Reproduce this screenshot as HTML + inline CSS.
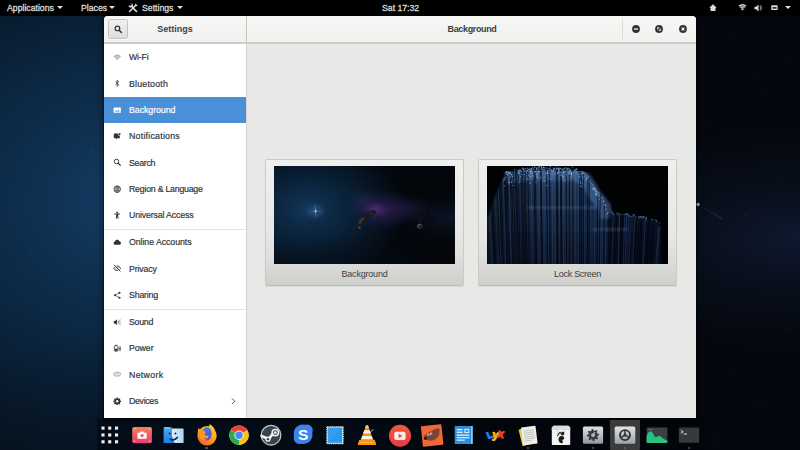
<!DOCTYPE html>
<html>
<head>
<meta charset="utf-8">
<title>Settings - Background</title>
<style>
html,body{margin:0;padding:0;}
body{width:800px;height:450px;overflow:hidden;position:relative;background:#050a12;font-family:"Liberation Sans",sans-serif;font-size:9px;color:#2e3436;}
.abs{position:absolute;}
#wall{left:0;top:0;width:800px;height:450px;overflow:hidden;}
.wp{position:absolute;left:0;top:0;width:800px;height:450px;transform-origin:0 0;background:
  radial-gradient(ellipse 8px 8px at 184px 207px, #fff 0%, rgba(200,225,255,0.85) 30%, rgba(120,170,230,0) 100%),
  radial-gradient(ellipse 42px 2.500px at 184px 207px, rgba(200,225,255,0.75) 0%, rgba(160,200,255,0) 100%),
  radial-gradient(ellipse 2.500px 36px at 184px 207px, rgba(200,225,255,0.6) 0%, rgba(160,200,255,0) 100%),
  radial-gradient(ellipse 46px 40px at 184px 207px, rgba(80,135,195,0.5) 0%, rgba(40,90,150,0) 100%),
  radial-gradient(ellipse 60px 42px at 446px 200px, rgba(125,55,160,0.7) 0%, rgba(90,45,130,0.3) 60%, rgba(50,30,90,0) 100%),
  radial-gradient(ellipse 150px 90px at 480px 200px, rgba(84,44,130,0.65) 0%, rgba(62,38,108,0.38) 50%, rgba(40,28,80,0) 100%),
  radial-gradient(ellipse 70px 55px at 395px 160px, rgba(50,55,120,0.4) 0%, rgba(30,30,80,0) 100%),
  radial-gradient(ellipse 100px 60px at 600px 195px, rgba(50,38,100,0.45) 0%, rgba(30,25,70,0) 100%),
  radial-gradient(ellipse 270px 110px at 800px 238px, rgba(15,26,50,0.9) 0%, rgba(11,20,38,0.55) 45%, rgba(6,11,22,0) 100%),
  radial-gradient(ellipse 420px 130px at 300px 450px, rgba(7,20,35,0.6) 0%, rgba(7,20,35,0) 100%),
  radial-gradient(ellipse 440px 330px at 150px 200px, #174370 0%, #12395e 12%, #0f3152 24%, #0c2945 40%, #091e33 60%, #061422 78%, #04070d 100%),
  #04070d;}
#topbar{left:0;top:0;width:800px;height:16px;background:#000;color:#dcdcdc;font-size:8.7px;-webkit-text-stroke:0.3px #dcdcdc;}
#topbar span{position:absolute;top:0;line-height:16px;white-space:nowrap;}
.tri{position:absolute;width:0;height:0;border-left:3px solid transparent;border-right:3px solid transparent;border-top:3px solid #e4e4e4;top:6px;}
#win{left:104px;top:16px;width:592px;height:402px;background:#e8e8e7;border-radius:4px 4px 0 0;overflow:hidden;box-shadow:0 2px 9px rgba(0,0,0,0.55),0 0 0 1px rgba(0,0,0,0.35);}
#hdrL{left:0;top:0;width:142px;height:26px;background:linear-gradient(#f6f6f5,#f1f1f0);border-bottom:2px solid #cbcbc8;}
#hdrR{left:142px;top:0;width:450px;height:26px;background:linear-gradient(#f6f6f5,#f1f1f0);border-bottom:2px solid #cbcbc8;border-left:1px solid #c6c6c3;}
.title{font-weight:bold;font-size:9px;color:#3a3f41;line-height:26px;text-align:center;}
#side{left:0;top:28px;width:142px;height:375px;background:#fff;border-right:1px solid #d4d4d1;}
.row{position:absolute;left:0;width:142px;height:26.35px;line-height:26.35px;}
.row span{position:absolute;left:25px;top:0;white-space:nowrap;font-size:8.8px;color:#2e3436;-webkit-text-stroke:0.18px #2e3436;}
.row svg{position:absolute;left:8.800px;top:8.700px;width:8.400px;height:8.400px;}
.row.sel{background:#4a90d9;}
.row.sel span{color:#fff;-webkit-text-stroke:0.18px #fff;}
.sep{position:absolute;left:0;width:142px;height:1px;background:#e4e4e2;}
.card{position:absolute;top:143px;width:197px;height:125px;border:1px solid #cacac6;border-bottom-color:#bcbcb8;border-radius:2px;background:linear-gradient(#efefee 0%,#e7e7e5 60%,#dcdcda 82%,#cececb 100%);box-shadow:0 1px 1px rgba(0,0,0,0.07);}
.card .lbl{position:absolute;left:0;width:197px;top:108px;text-align:center;font-size:9px;color:#3c4143;line-height:12px;}
.card .img{position:absolute;left:8px;top:6px;width:181px;height:98px;overflow:hidden;background:#000;}
#dock{left:97px;top:418px;width:608px;height:32px;background:rgba(1,3,6,0.45);}
</style>
</head>
<body>
<div id="wall" class="abs"><div class="wp"><svg class="abs" style="left:0;top:0" width="800" height="450" viewBox="0 0 800 450"><path d="M62 40h.01M18 120h.01M75 185h.01M30 255h.01M88 300h.01M50 345h.01M12 390h.01M70 410h.01M40 75h.01M92 150h.01M732 33h.01M758 78h.01M765 90h.01M720 150h.01M780 180h.01M745 215h.01M770 260h.01M715 300h.01M790 330h.01M735 370h.01M760 405h.01M705 120h.01M785 60h.01" stroke="#9fb6d4" stroke-width="1.100" stroke-linecap="round" opacity=".24" fill="none"/><path d="M362 272l4 -24 18 -20 22 -10 16 -10 20 -6 10 6 -4 12 -20 12 -12 8 -10 18 -8 10 -6 14 -12 12 -14 -2z" fill="#1b1f27"/><path d="M372 262l8 -16 14 -10 8 4 -12 12 -8 14z" fill="#3b4350"/><path d="M412 224l20 -10 10 2 -14 10z" fill="#2b303b"/><circle cx="378" cy="283" r="5" fill="#59606c"/><path d="M632 232l8 36 14 -2 6 -36z" fill="#3a4a6a" opacity=".12"/><circle cx="645" cy="277" r="11.500" fill="#6a7686"/><circle cx="649" cy="280" r="11.500" fill="#10151f" opacity=".8"/><path d="M697 204l26 14 -1 2z" fill="#4a6a92" opacity=".2"/><circle cx="698" cy="204.500" r="1.800" fill="#b8cde8" opacity=".8"/></svg></div></div>

<div id="topbar" class="abs">
 <span style="left:7px">Applications</span><i class="tri" style="left:57px"></i>
 <span style="left:81px">Places</span><i class="tri" style="left:109px"></i>
 <span style="left:142px">Settings</span><i class="tri" style="left:177px"></i>
 <span style="left:382px">Sat 17:32</span>
 <i class="tri" style="left:785px"></i>

 <svg class="abs" style="left:127.500px;top:2.800px;width:10px;height:10px" viewBox="0 0 16 16"><path d="M2.500 13.500L12.500 3.500" stroke="#e4e4e4" stroke-width="2.400" stroke-linecap="round"/><path d="M13.500 13.500L8 8" stroke="#e4e4e4" stroke-width="2.600" stroke-linecap="round"/><path d="M0.800 3.800a3.400 3.400 0 0 0 5 3l1.500 1.500 1.800 -1.800 -1.500 -1.500a3.400 3.400 0 0 0 -3 -4.800l1.500 1.800 -.9 1.900 -2 .6z" fill="#e4e4e4"/><path d="M11.800 0.800l3.400 3.400 -2.200 .8 -2 -2z" fill="#e4e4e4"/></svg>
 <svg class="abs" style="left:708.500px;top:3.900px;width:8px;height:7.300px" preserveAspectRatio="none" viewBox="0 0 16 16"><path d="M8 0.500L0.500 8h2.500v7.500h10v-7.500h2.500z" fill="#dcdcdc"/></svg>
 <svg class="abs" style="left:737.500px;top:2.900px;width:9px;height:8px" viewBox="0 0 18 16"><path d="M9 15.500L0.500 5A13.500 13.500 0 0 1 17.500 5z" fill="#6a6a6a"/><path d="M2.500 5.800A10.500 10.500 0 0 1 15.500 5.800M5 9A6.500 6.500 0 0 1 13 9" stroke="#e0e0e0" stroke-width="2" fill="none"/><path d="M9 15L6.800 12.200a3.500 3.500 0 0 1 4.400 0z" fill="#e0e0e0"/></svg>
 <svg class="abs" style="left:754px;top:3.500px;width:9px;height:8px" viewBox="0 0 18 16"><path d="M1 5.500h3.500l4.500 -4.500v14l-4.500 -4.500h-3.500z" fill="#dcdcdc"/><path d="M11.500 3.500a6.500 6.500 0 0 1 0 9" stroke="#8a8a8a" stroke-width="2.200" fill="none"/><path d="M14.200 1.800a9.500 9.500 0 0 1 0 12.400" stroke="#4a4a4a" stroke-width="1.800" fill="none"/></svg>
 <svg class="abs" style="left:770.500px;top:4.800px;width:7.500px;height:5.500px" preserveAspectRatio="none" viewBox="0 0 16 11"><rect x="0.500" y="0.500" width="13.500" height="10" rx="1.500" fill="#dcdcdc"/><rect x="14" y="3" width="2" height="5" fill="#dcdcdc"/><rect x="3" y="4" width="9" height="3.500" fill="#333"/></svg>
</div>

<div id="win" class="abs">
 <div id="hdrL" class="abs"><div class="abs" style="left:4px;top:3px;width:18px;height:18px;border:1px solid #c3c3bf;border-radius:2.500px;background:linear-gradient(#f0f0ef,#dededc);box-shadow:0 1px 0 rgba(255,255,255,.6)"><svg class="abs" style="left:5px;top:5px;width:8.500px;height:8.500px" viewBox="0 0 16 16"><circle cx="6.500" cy="6.500" r="4.300" stroke="#2e3436" stroke-width="2.300" fill="none"/><path d="M9.800 9.800L14 14" stroke="#2e3436" stroke-width="2.800" stroke-linecap="round"/></svg></div><div class="title abs" style="left:0;width:142px;top:0">Settings</div></div>
 <div id="hdrR" class="abs"><div class="abs" style="left:374.500px;top:3px;width:1px;height:20px;background:#dcdcd9"></div>
<svg class="abs" style="left:385px;top:9px;width:8px;height:8px" viewBox="0 0 8 8"><circle cx="4" cy="4" r="3.900" fill="#2e3436"/><rect x="2" y="3.400" width="4" height="1.300" fill="#f4f4f3"/></svg>
<svg class="abs" style="left:408px;top:9px;width:8px;height:8px" viewBox="0 0 8 8"><circle cx="4" cy="4" r="3.900" fill="#2e3436"/><path d="M2.200 2.200h2.600l-2.600 2.600zM5.800 5.800h-2.600l2.600 -2.600z" fill="#f4f4f3"/></svg>
<svg class="abs" style="left:431.500px;top:9px;width:8px;height:8px" viewBox="0 0 8 8"><circle cx="4" cy="4" r="3.900" fill="#2e3436"/><path d="M2.600 2.600l2.800 2.800M5.400 2.600l-2.800 2.800" stroke="#f4f4f3" stroke-width="1.150"/></svg><div class="title abs" style="left:0;width:450px;top:0;letter-spacing:-0.37px">Background</div></div>
 <div id="side" class="abs">
  <div class="row" style="top:0.3px"><svg viewBox="0 0 16 16"><path d="M8 13.800L0.600 6.200A11.500 11.500 0 0 1 15.400 6.200Z" fill="#b0b2b2"/><path d="M2.800 8.400A8.500 8.500 0 0 1 13.200 8.400M5 10.600A5 5 0 0 1 11 10.600" stroke="#fff" stroke-width="0.900" fill="none" opacity=".75"/></svg><span style="letter-spacing:-0.200px">Wi-Fi</span></div>
  <div class="row" style="top:26.65px"><svg viewBox="0 0 16 16"><path d="M4.800 5L11 10.800L8 13.800V2.200L11 5.200L4.800 11" stroke="#2e3436" stroke-width="1.500" fill="none" stroke-linejoin="round"/></svg><span style="letter-spacing:0.200px">Bluetooth</span></div>
  <div class="row sel" style="top:53px"><svg viewBox="0 0 16 16"><rect x="1" y="3" width="14" height="10" rx="1.2" fill="#fff"/><path d="M3 11 L6 7.5 L8 9.5 L10.5 6.5 L13 11 Z" fill="#4a90d9" opacity=".75"/></svg><span style="letter-spacing:-0.060px">Background</span></div>
  <div class="row" style="top:79.35px"><svg viewBox="0 0 16 16"><path d="M2.5 3h7.5v3.5h3v5.5h-5l-2 2.2v-2.2h-3.500a1 1 0 0 1 -1 -1v-7a1 1 0 0 1 1 -1z" fill="#2e3436"/><circle cx="12.6" cy="3.6" r="1.9" fill="#2e3436"/></svg><span style="letter-spacing:0.238px">Notifications</span></div>
  <div class="row" style="top:105.7px"><svg viewBox="0 0 16 16"><circle cx="6.700" cy="6.700" r="4.300" stroke="#2e3436" stroke-width="1.800" fill="none"/><path d="M10 10L14 14" stroke="#2e3436" stroke-width="2.100" stroke-linecap="round"/></svg><span style="letter-spacing:-0.283px">Search</span></div>
  <div class="row" style="top:132.05px"><svg viewBox="0 0 16 16"><circle cx="8" cy="8" r="6.3" stroke="#2e3436" stroke-width="1.5" fill="none"/><ellipse cx="8" cy="8" rx="2.8" ry="6.3" stroke="#2e3436" stroke-width="1.2" fill="none"/><path d="M2 5.8h12M2 10.2h12M8 1.7v12.600" stroke="#2e3436" stroke-width="1.2"/></svg><span style="letter-spacing:-0.241px">Region &amp; Language</span></div>
  <div class="row" style="top:158.4px"><svg viewBox="0 0 16 16"><circle cx="8" cy="2.600" r="1.8" fill="#2e3436"/><path d="M2.500 5h11v1.800h-3.700l0.800 8h-1.700l-0.600 -4.500h-0.600l-0.600 4.500h-1.700l0.800 -8h-3.700z" fill="#2e3436"/></svg><span style="letter-spacing:-0.150px">Universal Access</span></div>
  <div class="sep" style="top:184.5px"></div>
  <div class="row" style="top:185.35px"><svg viewBox="0 0 16 16"><path d="M4.200 13a3.200 3.200 0 0 1 -0.400 -6.350a4.300 4.300 0 0 1 8.300 -0.650a3.550 3.550 0 0 1 0.300 7z" fill="#2e3436"/></svg><span style="letter-spacing:-0.073px">Online Accounts</span></div>
  <div class="row" style="top:211.7px"><svg viewBox="0 0 16 16"><path d="M1.200 8.300c2 -3.200 4.300 -4.400 6.800 -4.400s4.800 1.200 6.800 4.400c-2 3 -4.300 4.100 -6.800 4.100s-4.800 -1.100 -6.800 -4.100z" stroke="#2e3436" stroke-width="1.900" fill="none"/><circle cx="8" cy="8.200" r="2.500" fill="#2e3436"/><path d="M2.500 2.500l11 11" stroke="#fff" stroke-width="3.400"/><path d="M2.200 2.200l11.600 11.600" stroke="#2e3436" stroke-width="1.800" stroke-linecap="round"/></svg><span style="letter-spacing:-0.143px">Privacy</span></div>
  <div class="row" style="top:238.05px"><svg viewBox="0 0 16 16"><path d="M12.300 3.200L4 8l8.300 4.800" stroke="#2e3436" stroke-width="1.300" fill="none"/><circle cx="12.400" cy="3.200" r="2" fill="#2e3436"/><circle cx="3.800" cy="8" r="2" fill="#2e3436"/><circle cx="12.400" cy="12.800" r="2" fill="#2e3436"/></svg><span style="letter-spacing:-0.186px">Sharing</span></div>
  <div class="sep" style="top:264.5px"></div>
  <div class="row" style="top:265px"><svg viewBox="0 0 16 16"><path d="M1.500 5.700h2.500l3.500 -3.200v11l-3.500 -3.200h-2.500z" fill="#2e3436"/><path d="M9.300 5.300a3.800 3.800 0 0 1 0 5.400" stroke="#2e3436" stroke-width="1.300" fill="none"/><path d="M11.200 3.300a6.600 6.600 0 0 1 0 9.400" stroke="#8a8e8f" stroke-width="1.300" fill="none"/><path d="M13.100 1.600a9 9 0 0 1 0 12.800" stroke="#b5b8b8" stroke-width="1.200" fill="none"/></svg><span style="letter-spacing:-0.260px">Sound</span></div>
  <div class="row" style="top:291.35px"><svg viewBox="0 0 16 16"><rect x="2.700" y="3.200" width="6.600" height="10.600" rx="1.200" stroke="#2e3436" stroke-width="1.500" fill="none"/><rect x="4.500" y="1.500" width="3" height="1.500" fill="#2e3436"/><rect x="3.600" y="9" width="4.800" height="4" fill="#2e3436"/><path d="M12 5v3M14.500 5v3M11.200 8h4.100v1.500a2 2 0 0 1 -4.100 0zM13.250 11v3" stroke="#2e3436" stroke-width="1.200" fill="none"/></svg><span style="letter-spacing:-0.080px">Power</span></div>
  <div class="row" style="top:317.7px"><svg viewBox="0 0 16 16"><ellipse cx="8" cy="8" rx="7" ry="3.800" stroke="#8e9191" stroke-width="1.400" fill="none"/><ellipse cx="8" cy="8.300" rx="3.800" ry="1.700" stroke="#a4a7a7" stroke-width="1.100" fill="none"/></svg><span style="letter-spacing:0.300px">Network</span></div>
  <div class="row" style="top:344.05px"><svg viewBox="0 0 16 16"><path d="M8 1.300l1.100 0 .5 1.900 1.300 .55 1.700 -1 1.500 1.500 -1 1.700 .55 1.300 1.900 .5v2.100l-1.900 .5 -.55 1.300 1 1.700 -1.500 1.500 -1.700 -1 -1.300 .55 -.5 1.900h-2.100l-.5 -1.900 -1.300 -.55 -1.700 1 -1.500 -1.500 1 -1.700 -.55 -1.300 -1.900 -.5v-2.100l1.900 -.5 .55 -1.300 -1 -1.700 1.500 -1.500 1.700 1 1.300 -.55 .5 -1.900z" fill="#2e3436" transform="translate(0,-0.400)"/><circle cx="8" cy="8" r="2.300" fill="#fff"/></svg><span style="letter-spacing:-0.329px">Devices</span><svg viewBox="0 0 16 16" style="left:124.500px"><path d="M5.500 2.500L11 8l-5.500 5.500" stroke="#2e3436" stroke-width="1.600" fill="none"/></svg></div>
 </div>
 <div class="card" style="left:161px"><div class="img" id="img1"><div class="wp" style="transform:scale(0.22625,0.21778);filter:brightness(0.84)"><svg class="abs" style="left:0;top:0" width="800" height="450" viewBox="0 0 800 450"><path d="M62 40h.01M18 120h.01M75 185h.01M30 255h.01M88 300h.01M50 345h.01M12 390h.01M70 410h.01M40 75h.01M92 150h.01M732 33h.01M758 78h.01M765 90h.01M720 150h.01M780 180h.01M745 215h.01M770 260h.01M715 300h.01M790 330h.01M735 370h.01M760 405h.01M705 120h.01M785 60h.01" stroke="#9fb6d4" stroke-width="1.100" stroke-linecap="round" opacity=".24" fill="none"/><path d="M362 272l4 -24 18 -20 22 -10 16 -10 20 -6 10 6 -4 12 -20 12 -12 8 -10 18 -8 10 -6 14 -12 12 -14 -2z" fill="#1b1f27"/><path d="M372 262l8 -16 14 -10 8 4 -12 12 -8 14z" fill="#3b4350"/><path d="M412 224l20 -10 10 2 -14 10z" fill="#2b303b"/><circle cx="378" cy="283" r="5" fill="#59606c"/><path d="M632 232l8 36 14 -2 6 -36z" fill="#3a4a6a" opacity=".12"/><circle cx="645" cy="277" r="11.500" fill="#6a7686"/><circle cx="649" cy="280" r="11.500" fill="#10151f" opacity=".8"/><path d="M697 204l26 14 -1 2z" fill="#4a6a92" opacity=".2"/><circle cx="698" cy="204.500" r="1.800" fill="#b8cde8" opacity=".8"/></svg></div></div><div class="lbl" style="letter-spacing:-0.2px">Background</div></div>
 <div class="card" style="left:374px"><div class="img" id="img2"><!--L--><svg class="abs" style="left:0;top:0;filter:saturate(0.8) brightness(0.93)" width="181" height="98" viewBox="0 0 181 98"><defs><linearGradient id="lg1" x1="0" y1="0" x2="0" y2="1"><stop offset="0" stop-color="#2a5290"/><stop offset=".2" stop-color="#1f4072"/><stop offset=".5" stop-color="#193462"/><stop offset=".8" stop-color="#152c54"/><stop offset="1" stop-color="#12264a"/></linearGradient><linearGradient id="lg2" gradientUnits="userSpaceOnUse" x1="0" y1="0" x2="0" y2="98"><stop offset="0" stop-color="#5a92dc"/><stop offset=".25" stop-color="#3562a4"/><stop offset=".6" stop-color="#23487e"/><stop offset="1" stop-color="#1c3a68"/></linearGradient><filter id="bl" x="-5%" y="-5%" width="110%" height="110%"><feGaussianBlur stdDeviation="1.2"/></filter><filter id="bl2"><feGaussianBlur stdDeviation="0.35"/></filter></defs><rect width="181" height="98" fill="#010204"/><path d="M0 54 L4 42 L10 26 L18.8 7 L30 4.5 L43.7 3 L79.3 3 L90 4.5 L98.3 8 L103 15 L107.8 23.9 L113 30 L117.3 35.7 L119 42 L119.7 47.6 L128 48.5 L138.7 49.5 L155 52.5 L167.2 55 L173.2 59.5 L174 100 L0 98Z" fill="url(#lg1)" opacity=".8" filter="url(#bl)"/><path d="M-2 98V52L18.800 5L30 3L8 98Z" fill="#03070f" opacity=".35" filter="url(#bl)"/><path d="M18.8 12 L30 9.5 L43.7 8 L79.3 8 L90 9.5 L98.3 13 L103 20 L107.8 28.9 L113 35 L117.3 40.7 L119 47 L119.7 52.6" stroke="#4f86d4" stroke-width="13" opacity=".5" fill="none" filter="url(#bl)"/><path d="M121 47L174 58V98H121Z" fill="#02050b" opacity=".45" filter="url(#bl)"/><rect x="-5" y="66" width="190" height="45" fill="#02050b" opacity=".12" filter="url(#bl)"/><rect x="40" y="40" width="70" height="3" fill="#5a8cd2" opacity=".35" filter="url(#bl)"/><rect x="106" y="62" width="34" height="3" fill="#5a8cd2" opacity=".35" filter="url(#bl)"/><g filter="url(#bl2)"><path d="M4.4 40.1L7.3 98M6 37.5L8.8 98M10.5 22.8L13.1 98M12.5 17.7L15.1 98M14 18.3L16.6 98M17.4 10L19.9 98M18.5 8.6L20.8 98M20 7.4L22.4 98M23.1 6.9L25.3 98M24.6 5.5L26.8 98M26.4 4.3L28.5 98M28.4 3.4L30.5 98M29.5 5.1L31.5 98M31.1 4.9L33.1 98M34 5L35.8 98M35.3 3.4L37.2 98M36.9 1.1L38.7 98M38.4 2.1L40.1 98M40.8 1.9L42.5 98M46.9 0.4L48.4 98M48.3 2.8L49.7 98M53.1 1.1L54.4 98M54.3 0.6L55.4 98M59.5 0.3L60.6 98M62.3 2.7L63.3 98M69.1 3L69.8 98M70.4 0.1L71 98M73.2 0.6L73.8 98M74.4 3.6L74.9 98M79.2 3.7L79.5 98M82.7 1.3L83 98M85.8 3.3L85.9 98M92.7 5.9L92.6 98M94.4 5.2L94.3 98M96.5 7.3L96.3 98M100.8 10.5L100.4 98M102.4 13.5L102 98M110.9 25.9L110.2 98M113.2 28.6L112.4 98M117.4 36.1L116.5 98M122.3 48.3L121.2 98M124.3 47.1L123.1 98M128 49.2L126.7 98M129.9 47.6L128.5 98M134.2 49.2L132.7 98M135.1 46.2L133.6 98M136.2 48.7L134.6 98M149.6 48.9L147.6 98M152 50.6L150 98M154.1 51.6L151.9 98M155.1 51.5L152.9 98M159.3 51.1L156.9 98M161.2 53.5L158.8 98M161.9 52.8L159.5 98M163 52.6L160.6 98M165.4 53.1L162.9 98M167.1 54L164.6 98" stroke="#02050b" stroke-width="1.100" opacity=".62" fill="none"/><path d="M8.3 31.8L11 98M49.5 3.6L50.8 98M50.8 5.3L52.1 98M58.3 1.4L59.3 98M66.3 1.4L67.1 98M80.4 5.3L80.7 98M87 3.6L87.1 98M111.9 26.9L111.2 98M125.8 49.3L124.6 98M126.9 48.4L125.7 98" stroke="url(#lg2)" stroke-width=".8" opacity="0.3" fill="none"/><path d="M2 50.3L4.9 98M3.1 45.7L6 98M11.4 22.7L14 98M16.3 11.9L18.8 98M44.1 1.8L45.6 98M55.4 4.5L56.6 98M60.8 5.5L61.8 98M77.7 5L78.1 98M97.7 10.7L97.4 98M103.9 17.8L103.4 98M116.1 35.5L115.2 98M141.8 50.8L140.1 98M143.5 52.7L141.7 98M147.6 53.6L145.7 98" stroke="url(#lg2)" stroke-width=".8" opacity="0.45" fill="none"/><path d="M22.1 5.3L24.4 98M56.8 2.8L57.9 98M88.5 2.4L88.5 98M91.2 6.2L91.2 98M108 26.1L107.4 98M119.1 45.6L118.2 98M137.7 51.7L136.2 98M171.6 61.2L168.8 98" stroke="url(#lg2)" stroke-width=".8" opacity="0.6" fill="none"/><path d="M52 1.3L53.2 98M65 4.1L65.8 98M67.8 2.9L68.5 98M72.3 4.1L72.9 98M76.1 2.2L76.6 98M84 5L84.2 98M114.5 35L113.7 98M132.7 47.5L131.3 98M139.8 49.9L138.2 98M158.4 51.3L156.2 98M172.6 60.9L169.8 98" stroke="url(#lg2)" stroke-width=".8" opacity="0.75" fill="none"/></g><path d="M96.8 6.4h.01M99.9 14.1h.01M89.9 2.8h.01M117.6 38.8h.01M19.8 5.8h.01M32 7.1h.01M116 32h.01M82.4 5.1h.01M27.7 3.4h.01M52.7 0.5h.01M48.1 5.4h.01M108.7 27.3h.01M25.8 19.6h.01M35.4 2.2h.01M76 10.1h.01M77.5 2.4h.01M51.8 1h.01M86.9 10h.01M105.8 23.5h.01M111.9 27.2h.01M105.8 18.4h.01M118.5 39h.01M85.4 11.8h.01M17.1 14.3h.01M53.6 11.7h.01M33.4 4.3h.01M74.9 6.5h.01M94.7 7.6h.01M47.5 0.7h.01M95.5 10.2h.01M37.1 8.6h.01M40.6 2.2h.01M119.1 43.2h.01M49 5.4h.01M33.5 10.6h.01M104.2 17.6h.01M111.1 26.4h.01M75.9 3.8h.01M108.4 28.3h.01M72.4 3.2h.01M83.6 4.7h.01M72.9 2.2h.01M34.1 5.3h.01M36.4 2.9h.01M78.8 1.7h.01M100.8 10.8h.01M32 16.6h.01M66.1 5.8h.01M21.1 6.5h.01M31.3 4.5h.01M50.8 6.9h.01M80.6 3.7h.01M41.4 4h.01M89.8 8.1h.01M83.8 6.5h.01M76.9 5.5h.01M49.1 1.6h.01M17.4 19.8h.01M112.4 33.4h.01M57.2 1.7h.01M107.6 23.8h.01M75.1 7.1h.01M31.5 6.7h.01M54.3 1.1h.01M101.3 10.7h.01M114.4 31.4h.01" stroke="#6aa6f0" stroke-width="1.300" stroke-linecap="round" opacity=".85" fill="none"/><path d="M18.1 12h.01M70.5 7.6h.01M74.1 8.1h.01M24.6 8.9h.01M81.9 2.4h.01M106.6 21h.01M54.9 2.8h.01M98.6 9.9h.01M82.8 6h.01M63.5 13.1h.01M63.2 0.4h.01M64.7 4.3h.01M99.9 12.1h.01M40 12.9h.01M112.2 29.3h.01M84.4 6.7h.01M78.9 5.8h.01M70.7 7.3h.01M85 8h.01M106 22.6h.01M63.5 3.3h.01M87.5 4.4h.01M62.1 2.4h.01M74 9.3h.01M76.7 6.5h.01M76 13.3h.01M44.7 6.3h.01M42 9.1h.01M36.3 3.2h.01M98.4 7.7h.01M31.9 7.5h.01M108.8 24.6h.01M69.3 3h.01M73.7 2.5h.01M110.1 27.4h.01M37.3 4.6h.01M83.1 6.7h.01M60.2 6h.01M99.2 14.3h.01M118.6 39.5h.01M50.4 2.1h.01M80.2 2.3h.01M24.5 16.2h.01M96.6 7.4h.01M89.7 6h.01M43.3 17.2h.01M60.5 4.3h.01M93.7 16.9h.01M65.1 6.2h.01M56.6 1.5h.01M68 7.8h.01M70.3 2.3h.01M48.4 5.8h.01M92.4 10.7h.01M108.5 26h.01M85.7 1.1h.01M46.6 3.1h.01M66.4 4.4h.01M44.2 2.5h.01M32.6 4.1h.01M44.5 2.6h.01M89.3 3.5h.01M55.4 3.3h.01M84.2 11.1h.01M43.3 5.2h.01M51.7 5.8h.01M100.3 12.2h.01M45.8 10h.01M120.4 47.7h.01" stroke="#86b8f6" stroke-width="1.300" stroke-linecap="round" opacity=".85" fill="none"/><path d="M45.4 8.7h.01M69.5 0.6h.01M73.4 6.2h.01M71.8 4.8h.01M72.2 6.6h.01M82.8 8.3h.01M94.8 8.6h.01M116.1 34.3h.01M95.6 7.4h.01M67.3 2.6h.01M85 8.7h.01M47.3 1h.01M77.4 12.1h.01M92.4 8.2h.01M50.5 9.3h.01M62.6 4.5h.01M54.8 5.1h.01M58 10.7h.01M59.7 1.9h.01M50.4 8h.01M45.5 6.6h.01M80 2.7h.01M111.4 29.5h.01M109.5 25.1h.01M47.2 5.9h.01M43.7 3.7h.01M75.5 10.7h.01M67.2 8.8h.01M44.1 7.3h.01M84.7 6.4h.01M102.8 15.5h.01M97.8 10.1h.01M51.2 7h.01M111 29.2h.01M34.5 5.4h.01M79.6 8.6h.01M44.4 6.2h.01M79.1 4.8h.01M108.5 22.7h.01M108.7 25.4h.01M48.8 16.2h.01M45 11.9h.01M62.8 7.4h.01M23.3 7.1h.01M81.8 7.7h.01M23.4 10.8h.01M17.3 13.5h.01M87.7 5.8h.01M106.7 22.7h.01M54.7 0.5h.01M44.9 4.1h.01M66.8 3.6h.01M57.2 3.4h.01M94.7 5.9h.01M75 3.4h.01M100.2 11.2h.01M77.6 14.5h.01M111.9 30.9h.01M65.8 8.8h.01M24.5 8.6h.01M82.2 5.7h.01M56.7 1.7h.01M81.9 4.9h.01M102.7 16.1h.01M21.2 8.9h.01M76 9.5h.01M77.9 15.1h.01M34.8 8.6h.01M96.6 11.6h.01M100.2 9.5h.01M108.6 26.4h.01M45.5 1.7h.01M75 3.5h.01M106.2 20.1h.01M109.2 26.9h.01M18 11.2h.01" stroke="#4f8ee0" stroke-width="1.300" stroke-linecap="round" opacity=".85" fill="none"/><path d="M52.1 5.3h.01M93.8 20.4h.01M43.1 10.5h.01M57.1 15h.01M21.7 7.1h.01M86.5 6.7h.01M25.2 10.3h.01M49.3 8.3h.01M82.9 3.6h.01M42.5 3.1h.01M71.5 3.5h.01M49.5 3h.01M110 28.3h.01M67.2 2.2h.01M107.9 23.9h.01M19 6.8h.01M38.7 5.3h.01M54.4 1.9h.01M84.3 7.7h.01M22.6 6.8h.01M116.8 36h.01M95.2 5.8h.01M50.4 10.9h.01M107.1 23.2h.01M19.5 5.6h.01M21.8 16.5h.01M31.9 5.3h.01M107.4 22.8h.01M81.7 7.2h.01M44 7.5h.01M44.2 4.8h.01M107.8 22.2h.01M56.4 1.4h.01M99.5 12.5h.01M38.2 2.7h.01M19.1 6.7h.01M20.3 8.6h.01M71.1 2.2h.01M24.1 8h.01M71.1 5.9h.01M109.1 28.9h.01M43.4 5.3h.01M84.8 9h.01M60.6 7h.01M59.1 7.7h.01M40.3 4.5h.01M75.9 10.5h.01M109.8 25.4h.01M60.1 19.6h.01" stroke="#a8cdfb" stroke-width="1.300" stroke-linecap="round" opacity=".85" fill="none"/><path d="M140.6 48.3h.01M154.8 52h.01M139.3 48.7h.01M138.8 47.7h.01M168 53.9h.01M125 46.5h.01M159.3 51.4h.01M159.4 52.3h.01M156.1 50.7h.01M125.6 46.1h.01M138.6 48.1h.01M120.5 46.4h.01M141.4 48.3h.01M148.5 51.2h.01M130.8 48.5h.01M137 48.7h.01M125.7 48.2h.01M142.8 50.2h.01M131.6 47.4h.01M157.4 50.9h.01M134.5 48.3h.01M170.2 55.6h.01M129.7 47.1h.01M172.4 56.8h.01M153.6 50.7h.01M154.1 50.4h.01M152.7 51.8h.01M165.4 53.7h.01M146.8 49.9h.01M126 47.9h.01M156.6 51.5h.01M155.3 51.1h.01M140.4 47.9h.01M151.8 50.8h.01M147.3 48.7h.01M153.2 50.8h.01M151.4 50.8h.01M169.4 54.5h.01M144.8 50.6h.01M159.1 51.6h.01M159 53.3h.01M141.3 49.6h.01M126.7 48.3h.01M146 48.9h.01M164.5 53.6h.01" stroke="#4a7cc0" stroke-width="1.300" stroke-linecap="round" opacity=".85" fill="none"/></svg><!--/L--></div><div class="lbl" style="letter-spacing:-0.27px">Lock Screen</div></div>
</div>

<!--D--><div id="dock" class="abs"><div class="abs" style="left:513px;top:2px;width:30px;height:30px;background:#3b3b3b;border-radius:1px"></div><svg class="abs" style="left:1.00px;top:4.500px;width:24px;height:24px" viewBox="0 0 24 24"><rect x="3.45" y="3.55" width="3.100" height="3.100" fill="#f0f0f0"/><rect x="10.15" y="3.55" width="3.100" height="3.100" fill="#f0f0f0"/><rect x="16.95" y="3.55" width="3.100" height="3.100" fill="#f0f0f0"/><rect x="3.45" y="10.45" width="3.100" height="3.100" fill="#f0f0f0"/><rect x="10.15" y="10.45" width="3.100" height="3.100" fill="#f0f0f0"/><rect x="16.95" y="10.45" width="3.100" height="3.100" fill="#f0f0f0"/><rect x="3.45" y="17.25" width="3.100" height="3.100" fill="#f0f0f0"/><rect x="10.15" y="17.25" width="3.100" height="3.100" fill="#f0f0f0"/><rect x="16.95" y="17.25" width="3.100" height="3.100" fill="#f0f0f0"/></svg><svg class="abs" style="left:33.18px;top:4.500px;width:24px;height:24px" viewBox="0 0 24 24"><defs><linearGradient id="d1" x1="0" y1="0" x2="0" y2="1"><stop offset="0" stop-color="#f57f5b"/><stop offset="1" stop-color="#e63d6e"/></linearGradient></defs><rect x="2.200" y="4" width="19.700" height="16.300" rx="1.800" fill="url(#d1)"/><path d="M8.200 9.700h1.700l.8 -1.200h2.800l.8 1.200h1.700a.7 .7 0 0 1 .7 .7v4.600a.7 .7 0 0 1 -.7 .7h-7.800a.7 .7 0 0 1 -.7 -.7v-4.600a.7 .7 0 0 1 .7 -.7z" fill="#fff"/><circle cx="12.100" cy="12.600" r="1.700" fill="#ee5f66"/><path d="M4 7.500v-1.700h1.700M20.200 7.500v-1.700h-1.700M4 16.800v1.700h1.700M20.200 16.800v1.700h-1.700" stroke="#fff" stroke-width=".5" fill="none" opacity=".7"/></svg><svg class="abs" style="left:65.36px;top:4.500px;width:24px;height:24px" viewBox="0 0 24 24"><defs><linearGradient id="d2" x1="0" y1="0" x2="0" y2="1"><stop offset="0" stop-color="#4eaaf3"/><stop offset="1" stop-color="#1d7ee0"/></linearGradient><linearGradient id="d2b" x1="0" y1="0" x2="1" y2="0"><stop offset="0" stop-color="#e3f1fc"/><stop offset="1" stop-color="#a9d4f7"/></linearGradient></defs><path d="M9.500 5.600h11.400a.7 .7 0 0 1 .7 .7v13a.7 .7 0 0 1 -.7 .7h-11.400z" fill="url(#d2b)"/><path d="M1.640 4.700a.7 .7 0 0 1 .7 -.7h6.700l1 1.600h.4c-.6 3 -1.300 5.500 -1.200 8.400h1.500c.2 2.200 .9 4.200 2.100 6h-10.500a.7 .7 0 0 1 -.7 -.7z" fill="url(#d2)"/><rect x="2.600" y="4.600" width="4.500" height=".8" fill="#d8ecfb" opacity=".8"/><circle cx="7.600" cy="10.400" r="1" fill="#15293d"/><circle cx="13.400" cy="10.400" r="1" fill="#15293d"/><path d="M8.300 16.200c2.300 1.200 5.200 .6 7 -1.700" stroke="#15293d" stroke-width="1.700" fill="none" stroke-linecap="round"/></svg><svg class="abs" style="left:97.54px;top:4.500px;width:24px;height:24px" viewBox="0 0 24 24"><defs><linearGradient id="d3" x1=".9" y1=".1" x2=".2" y2="1"><stop offset="0" stop-color="#ffc62c"/><stop offset=".45" stop-color="#ff9a1f"/><stop offset="1" stop-color="#f4611c"/></linearGradient><linearGradient id="d3b" x1="0" y1="0" x2="0" y2="1"><stop offset="0" stop-color="#3f7ae6"/><stop offset=".6" stop-color="#4060d8"/><stop offset="1" stop-color="#6a45c8"/></linearGradient></defs><circle cx="12" cy="12.800" r="9.700" fill="url(#d3)"/><path d="M13.200 4c.9 -.8 1.500 -1.800 1.600 -3 2.600 1.600 4.600 4.200 5.400 7.300l-3.500 -1.500z" fill="#ffc62c"/><path d="M2.600 10.500l.6 -5.200 3.800 2.200z" fill="#ff9a1f"/><ellipse cx="12" cy="10.800" rx="4.700" ry="6.600" fill="url(#d3b)"/><path d="M4.500 8.300c2.200 -1.300 5 -.8 6.500 1.200 -1 .4 -1.500 1.200 -1.300 2.200 1 1 2.500 1.300 3.800 .6 .3 2.600 -1.700 4.800 -4.700 4.800 -3.500 0 -5.800 -4 -4.300 -8.800z" fill="#ff961e"/><path d="M9 15.300c1.700 1 4 .6 5.200 -.8" stroke="#4a58d0" stroke-width="1" fill="none" opacity=".8"/><path d="M16.300 6.500c1.800 2.200 2 5.500 .3 8 1.600 -.8 2.700 -2.300 3 -4 -.4 -1.700 -1.700 -3.200 -3.300 -4z" fill="#ffb827"/></svg><svg class="abs" style="left:129.72px;top:4.500px;width:24px;height:24px" viewBox="0 0 24 24"><circle cx="12" cy="12.200" r="9.700" fill="#fff"/><path d="M12 12.200L3.600 7.350A9.700 9.700 0 0 1 20.400 7.350z" fill="#e94335"/><path d="M12 2.500A9.700 9.700 0 0 1 20.400 7.350H12z" fill="#e94335"/><path d="M12 12.200L20.400 7.350A9.700 9.700 0 0 1 12 21.900z" fill="#fbc116"/><path d="M12 12.200L12 21.900A9.700 9.700 0 0 1 3.600 7.350z" fill="#2da94f"/><circle cx="12" cy="12.200" r="4.700" fill="#f1f1f1"/><circle cx="12" cy="12.200" r="3.700" fill="#4a8af4"/></svg><svg class="abs" style="left:161.90px;top:4.500px;width:24px;height:24px" viewBox="0 0 24 24"><circle cx="12" cy="12.200" r="9.800" fill="#3c424b" stroke="#c2c6ca" stroke-width="1.300"/><circle cx="16.300" cy="9.600" r="3.200" fill="none" stroke="#f2f2f2" stroke-width="1.500"/><circle cx="16.300" cy="9.600" r="1.400" fill="#f2f2f2"/><path d="M2.600 13l6.300 2.700M13.400 11.200l-3.300 4.400" stroke="#f2f2f2" stroke-width="2.600" stroke-linecap="round"/><circle cx="8.900" cy="16.200" r="2.600" fill="#f2f2f2"/><circle cx="8.900" cy="16.200" r="1.200" fill="#3c424b"/></svg><svg class="abs" style="left:194.08px;top:4.500px;width:24px;height:24px" viewBox="0 0 24 24"><g transform="translate(12 11.300) scale(1.150) translate(-12 -12)"><path d="M4.300 9a8 8 0 0 1 9.700 -5.300a5 5 0 0 1 6 6.800a8 8 0 0 1 -9.500 9.700a5 5 0 0 1 -6.200 -6.500a8 8 0 0 1 0 -4.700z" fill="#3d83ea"/><text x="12.100" y="16.800" font-family="Liberation Sans,sans-serif" font-weight="bold" font-size="13.500" text-anchor="middle" fill="#fff">S</text></g></svg><svg class="abs" style="left:226.26px;top:4.500px;width:24px;height:24px" viewBox="0 0 24 24"><rect x="3.300" y="3.200" width="17.400" height="18" fill="#e9f3fb"/><rect x="3.300" y="3.200" width="17.400" height="18" fill="none" stroke="#0a0e14" stroke-width="1.200" stroke-dasharray=".9 1.300"/><rect x="4.700" y="4.600" width="14.600" height="15.200" fill="#2b98ec"/><path d="M4.700 4.600h14.600l-14.600 15.200z" fill="#3ba4f2" opacity=".6"/></svg><svg class="abs" style="left:258.44px;top:4.500px;width:24px;height:24px" viewBox="0 0 24 24"><path d="M11 2.600q1 -.8 2 0l5.200 14.400h-12.400z" fill="#f7901e"/><path d="M11 2.600q1 -.8 2 0l.9 2.500h-3.800z" fill="#f9cf5a"/><path d="M9.300 7.300h5.400l1.200 3.300h-7.800zM7.300 12.900h9.400l1.200 3.300h-11.800z" fill="#f6f3ee"/><path d="M4.300 16.800h15.400l1.500 4.200a.8 .8 0 0 1 -.8 1h-16.800a.8 .8 0 0 1 -.8 -1z" fill="#ff9408"/><path d="M6 19.500h12" stroke="#ffc24a" stroke-width="1" opacity=".8"/><path d="M15.500 9.500c.5 -1.600 1.500 -2.500 3 -2.800" stroke="#e8e8e8" stroke-width=".8" fill="none"/></svg><svg class="abs" style="left:290.62px;top:4.500px;width:24px;height:24px" viewBox="0 0 24 24"><defs><linearGradient id="d9" x1="0" y1="0" x2="0" y2="1"><stop offset="0" stop-color="#f05a3c"/><stop offset="1" stop-color="#e8394b"/></linearGradient></defs><circle cx="12" cy="12.700" r="11" fill="url(#d9)"/><rect x="6.200" y="8.800" width="11.400" height="8.200" rx="2" fill="#fbecea"/><path d="M10.600 10.700l3.900 2.200 -3.900 2.200z" fill="#e8404a"/></svg><svg class="abs" style="left:322.80px;top:4.500px;width:24px;height:24px" viewBox="0 0 24 24"><g transform="rotate(-6 12 12.400)"><rect x="1.800" y="2.200" width="20.600" height="20.600" rx=".8" fill="#f2673a"/><path d="M3.600 13.200c.3 -1.600 1.600 -2.400 3 -2.200 .6 -1.300 1.800 -2 3 -2 .5 -.8 1.300 -1 2 -.6 2.200 -1.600 5 -2.600 8.200 -2.400 .8 4 -.6 8 -4 10.200 -3.300 2 -7.500 1.700 -9.700 -.2 -1 .3 -2.200 -.3 -2.500 -1.400 -.2 -.5 0 -1 0 -1.400z" fill="#7d4434"/><path d="M3.500 13.800c.8 -.8 2.200 -.8 3 0 .6 .8 .3 2 -.6 2.400 -1.300 .4 -2.500 -.8 -2.400 -2.400z" fill="#2e1a17"/><circle cx="8.500" cy="11.300" r="1.200" fill="#f1dfcf"/><circle cx="11.300" cy="10.500" r="1.200" fill="#f1dfcf"/><circle cx="8.700" cy="11.400" r=".5" fill="#2e1a17"/><circle cx="11.500" cy="10.600" r=".5" fill="#2e1a17"/></g></svg><svg class="abs" style="left:354.98px;top:4.500px;width:24px;height:24px" viewBox="0 0 24 24"><path d="M2.700 3.800a.8 .8 0 0 1 .8 -.8h15.500v18h-15.500a.8 .8 0 0 1 -.8 -.8z" fill="#2b8fe2"/><rect x="19" y="3" width="1.800" height="18" fill="#8cc6f4"/><rect x="4.700" y="6" width="6" height="1.300" fill="#e8f3fc"/><rect x="4.700" y="8.600" width="6" height="1.300" fill="#e8f3fc"/><rect x="12.300" y="5.800" width="5" height="4.300" fill="#d4e9fa"/><rect x="13.300" y="7" width="3" height="1.800" fill="#2b8fe2"/><rect x="4.700" y="11.500" width="12.600" height="1.300" fill="#e8f3fc"/><rect x="4.700" y="14" width="12.600" height="1.300" fill="#cfe5f8"/><rect x="4.700" y="16.500" width="8" height="1.300" fill="#cfe5f8"/></svg><svg class="abs" style="left:387.16px;top:4.500px;width:24px;height:24px" viewBox="0 0 24 24"><g font-family="Liberation Sans,sans-serif" font-weight="bold" stroke-linejoin="round"><text x="3" y="15" font-size="9.500" fill="#2a7be0" stroke="#2a7be0" stroke-width="1.100" transform="rotate(-22 6 12)">L</text><text x="8.300" y="15.300" font-size="11" fill="#f7b21a" stroke="#f7b21a" stroke-width="1.100" transform="rotate(8 11 13)">y</text><text x="13.800" y="14.800" font-size="9.500" fill="#e8452a" stroke="#e8452a" stroke-width="1.100" transform="rotate(12 17 11)">X</text></g></svg><svg class="abs" style="left:419.34px;top:4.500px;width:24px;height:24px" viewBox="0 0 24 24"><g transform="rotate(-14 12 12.500)"><rect x="4.200" y="4.600" width="14" height="17" rx=".6" fill="#e8c84a"/></g><g transform="rotate(-7 13 12.500)"><rect x="6" y="3.600" width="14.600" height="17.800" rx=".5" fill="#eeeee9"/><path d="M8 7.500h10.500M8 9.500h10.500M8 11.500h10.500M8 13.500h10.500M8 15.500h10.500M8 17.500h7" stroke="#a4a49e" stroke-width=".55"/></g></svg><svg class="abs" style="left:451.52px;top:4.500px;width:24px;height:24px" viewBox="0 0 24 24"><path d="M2.800 4.600l1.800 -1.800h14.800l1.800 1.800v16.400a1 1 0 0 1 -1 1h-16.400a1 1 0 0 1 -1 -1z" fill="#f4f4f2"/><path d="M2.800 4.600l1.800 -1.800h14.800l1.800 1.800v2.400h-18.400z" fill="#dcdcd8"/><path d="M8 6.300v.8a4 4 0 0 0 8 0v-.8" stroke="#c8c8c4" stroke-width=".8" fill="none"/><ellipse cx="13.700" cy="10.600" rx="1.600" ry="2" fill="#1a1a1a" transform="rotate(15 13.700 10.600)"/><circle cx="11.100" cy="9.800" r=".95" fill="#1a1a1a"/><circle cx="9.500" cy="10.900" r=".8" fill="#1a1a1a"/><circle cx="8.700" cy="12.500" r=".7" fill="#1a1a1a"/><path d="M12.400 13c2 0 3.100 1 2.900 2.300 -.2 1.200 -1.800 1.200 -1.900 2.200 -.1 .9 .9 1.200 .5 2.100 -.5 1.100 -2.300 .9 -3.300 -.3 -1.100 -1.300 -1.300 -3.300 -.6 -4.800 .5 -1 1.400 -1.500 2.400 -1.500z" fill="#1a1a1a"/></svg><svg class="abs" style="left:483.70px;top:4.500px;width:24px;height:24px" viewBox="0 0 24 24"><defs><linearGradient id="d15" x1="0" y1="0" x2="0" y2="1"><stop offset="0" stop-color="#dfe2e5"/><stop offset="1" stop-color="#8f969c"/></linearGradient></defs><rect x="1.900" y="3.400" width="20.200" height="17.400" rx="1.500" fill="url(#d15)"/><path d="M10.81 6.12L12.00 6.00L12.88 7.69L13.72 7.94L15.39 7.03L16.31 7.79L15.74 9.60L16.16 10.38L17.98 10.91L18.10 12.10L16.41 12.98L16.16 13.82L17.07 15.49L16.31 16.41L14.50 15.84L13.72 16.26L13.19 18.08L12.00 18.20L11.12 16.51L10.28 16.26L8.61 17.17L7.69 16.41L8.26 14.60L7.84 13.82L6.02 13.29L5.90 12.10L7.59 11.22L7.84 10.38L6.93 8.71L7.69 7.79L9.50 8.36L10.28 7.94Z" fill="#363b40"/><circle cx="12" cy="12.100" r="1.900" fill="#b4babe"/><path d="M12 12.100l2 -3" stroke="#b4babe" stroke-width="1.100"/></svg><svg class="abs" style="left:515.88px;top:4.500px;width:24px;height:24px" viewBox="0 0 24 24"><defs><linearGradient id="d16" x1="0" y1="0" x2="0" y2="1"><stop offset="0" stop-color="#e2e5e7"/><stop offset="1" stop-color="#9aa1a6"/></linearGradient></defs><rect x="1.700" y="3.400" width="20.600" height="17.400" rx="1.500" fill="url(#d16)"/><circle cx="12" cy="12.100" r="5" fill="none" stroke="#2f3438" stroke-width="1.900"/><circle cx="12" cy="12.100" r="1.500" fill="#2f3438"/><path d="M12 12.100v-4.500M12 12.100l4 2.300M12 12.100l-4 2.300" stroke="#2f3438" stroke-width="1.500"/></svg><svg class="abs" style="left:548.06px;top:4.500px;width:24px;height:24px" viewBox="0 0 24 24"><rect x="1.600" y="4.600" width="20.800" height="15.400" rx="1" fill="#3a4043"/><path d="M1.600 20v-7c1 -2.500 2 -4.800 4 -4.800s2.500 3.500 4.500 5.500c1.500 1.200 2.500 -1 4 -1s2 1.500 3.500 2.500c1.800 1.200 3.500 2 4.800 2.500v1.300a1 1 0 0 1 -1 1h-18.800a1 1 0 0 1 -1 -1z" fill="#27c281"/><rect x="3" y="6" width="5" height=".8" fill="#27c281" opacity=".7"/></svg><svg class="abs" style="left:580.24px;top:4.500px;width:24px;height:24px" viewBox="0 0 24 24"><rect x="1.800" y="4.600" width="20.400" height="15.100" rx="1" fill="#353a3d"/><path d="M3.800 7.300l2.400 1.500 -2.400 1.500" stroke="#f0f0f0" stroke-width=".9" fill="none"/><path d="M6.800 11h3.200" stroke="#f0f0f0" stroke-width=".9"/></svg><i class="abs" style="left:108.44px;top:29.200px;width:2.200px;height:2.200px;border-radius:50%;background:#3573c4;opacity:.85"></i><i class="abs" style="left:430.24px;top:29.200px;width:2.200px;height:2.200px;border-radius:50%;background:#3573c4;opacity:.85"></i><i class="abs" style="left:494.60px;top:29.200px;width:2.200px;height:2.200px;border-radius:50%;background:#3573c4;opacity:.85"></i><i class="abs" style="left:526.78px;top:29.200px;width:2.200px;height:2.200px;border-radius:50%;background:#3573c4;opacity:.85"></i><i class="abs" style="left:591.14px;top:29.200px;width:2.200px;height:2.200px;border-radius:50%;background:#3573c4;opacity:.85"></i></div><!--/D-->
</body>
</html>
